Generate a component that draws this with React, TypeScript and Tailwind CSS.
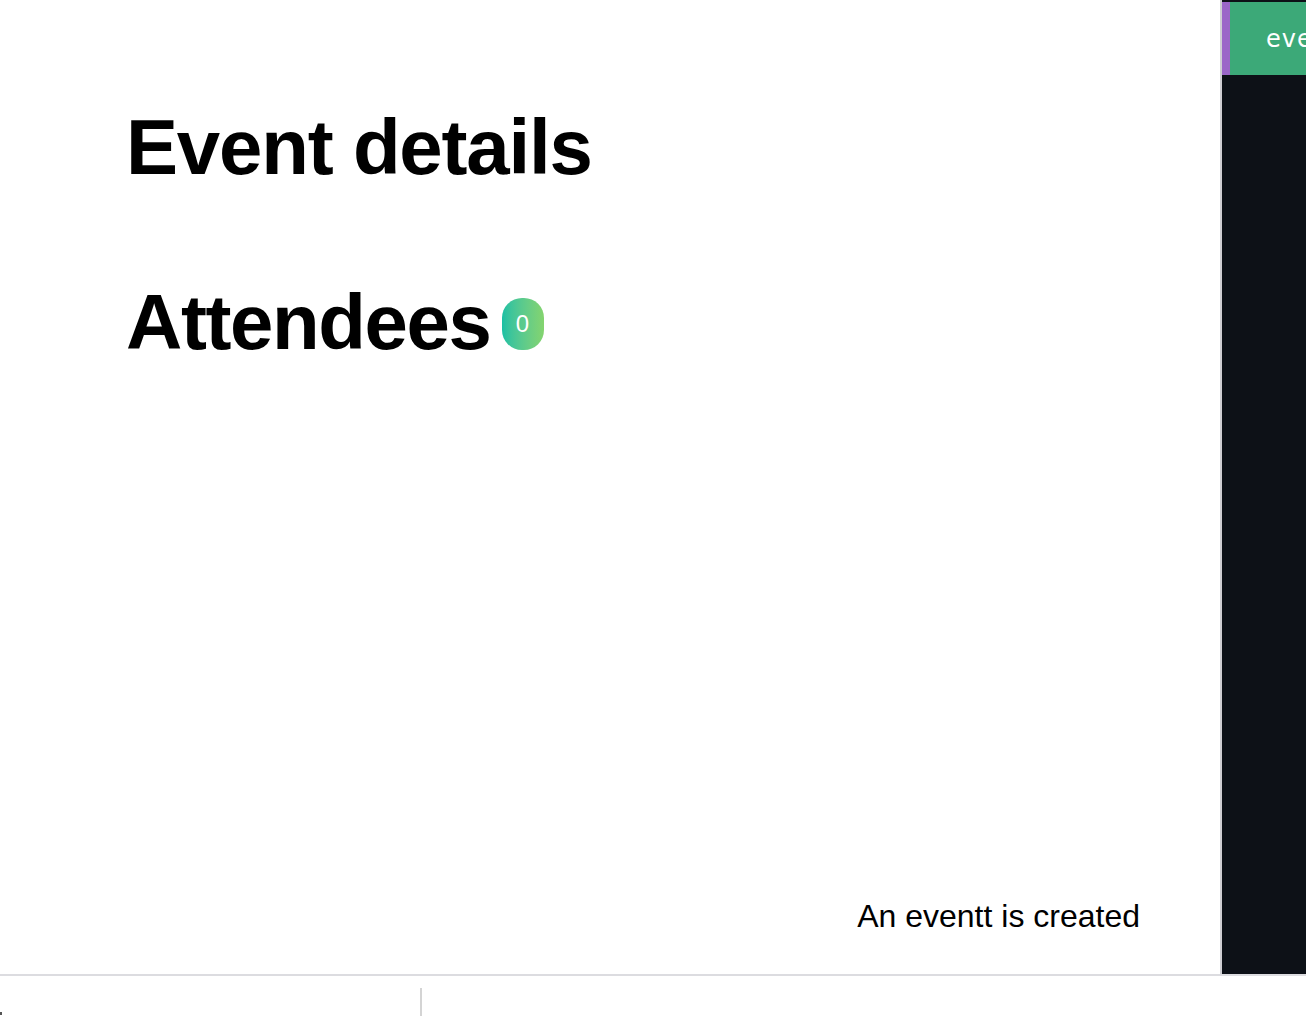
// Event details page with a side panel and footer strip
const headingFont = "font-['Liberation_Sans','Helvetica_Neue',Arial,sans-serif]";

function AttendeeBadge({ count }: { count: number }) {
  return (
    <span className="ml-[11px] mt-[4px] flex h-[52px] w-[42px] items-center justify-center rounded-[20px] bg-gradient-to-r from-[#16c0a4] to-[#84d46e] font-['Liberation_Sans',Arial,sans-serif] text-[24px] font-normal tracking-normal text-white">
      {count}
    </span>
  );
}

function SidePanel() {
  return (
    <aside className="h-full w-[86px] shrink-0 overflow-hidden border-l-2 border-[#cfcfd3] bg-[#0d1117]">
      <div className="mt-[2px] flex h-[73px] w-[200px] items-center border-l-8 border-[#9b66c8] bg-[#3ca978] pl-[36px]">
        <span className="whitespace-nowrap font-['DejaVu_Sans',sans-serif] text-[24px] leading-none tracking-[1px] text-white">
          events
        </span>
      </div>
    </aside>
  );
}

export default function App() {
  return (
    <div className="flex h-[1016px] w-full flex-col overflow-hidden bg-white">
      <div className="flex h-[974px] shrink-0">
        <main className={`flex min-w-0 flex-1 flex-col justify-between pb-[42px] pl-[126px] pr-[80px] pt-[108px] text-black ${headingFont}`}>
          <div>
            <h1 className="text-[78px] font-bold leading-[78px] tracking-[-1.2px]">Event details</h1>
            <div className="mt-[97px] flex items-center">
              <h2 className="text-[78px] font-bold leading-[78px] tracking-[-1.4px]">Attendees</h2>
              <AttendeeBadge count={0} />
            </div>
          </div>
          <p className="self-end text-[32px] leading-[32px]">An eventt is created</p>
        </main>
        <SidePanel />
      </div>
      <footer className="relative flex-1 border-t-2 border-[#dcdce0]">
        <div className="ml-[420px] mt-[12px] h-full w-[2px] bg-[#d4d4d4]" />
        <span className="absolute bottom-[1px] left-0 h-[3px] w-[2px] bg-[#555]" />
      </footer>
    </div>
  );
}
